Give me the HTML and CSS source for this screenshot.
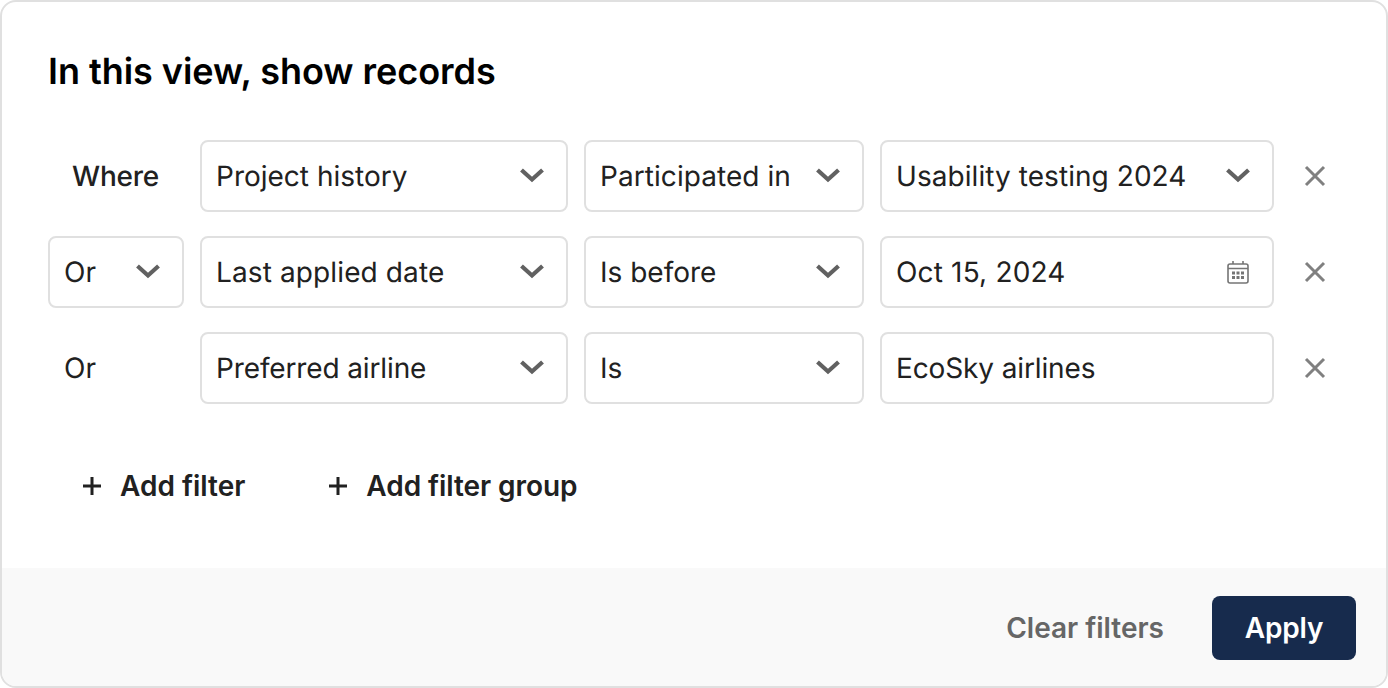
FILE: index.html
```html
<!DOCTYPE html>
<html lang="en">
<head>
<meta charset="utf-8">
<title>Filters</title>
<link rel="stylesheet" href="styles.css">
</head>
<body>
<svg class="defs" width="0" height="0" aria-hidden="true">
  <symbol id="chev" viewBox="0 0 24 24"><path d="M1.500 6 12 15.500 22.500 6" fill="none" stroke="currentColor" stroke-width="4.200"/></symbol>
  <symbol id="close" viewBox="0 0 24 24"><path d="M3 3 21 21M21 3 3 21" fill="none" stroke="currentColor" stroke-width="3"/></symbol>
  <symbol id="plus" viewBox="0 0 24 24"><path d="M12 3V21M3 12H21" fill="none" stroke="currentColor" stroke-width="3"/></symbol>
  <symbol id="cal" viewBox="0 0 24 24">
    <path d="M4 4H20A2 2 0 0 1 22 6V21A2 2 0 0 1 20 23H4A2 2 0 0 1 2 21V6A2 2 0 0 1 4 4ZM2 8.500H22M7 1V4M17 1V4" fill="none" stroke="currentColor" stroke-width="1.600"/>
    <path d="M6 11.500h3v3h-3zM10.500 11.500h3v3h-3zM15 11.500h3v3h-3zM6 16h3v3h-3zM10.500 16h3v3h-3zM15 16h3v3h-3z" fill="currentColor"/>
  </symbol>
</svg>
<main class="card">
  <section class="body">
    <h1 class="title">In this view, show records</h1>
    <div class="rows">
      <span class="where">Where</span>
      <div class="field"><span>Project history</span><svg class="chev"><use href="#chev"/></svg></div>
      <div class="field"><span class="loose-1">Participated in</span><svg class="chev"><use href="#chev"/></svg></div>
      <div class="field"><span class="loose-1">Usability testing 2024</span><svg class="chev"><use href="#chev"/></svg></div>
      <button class="remove" type="button" aria-label="Remove"><svg class="x"><use href="#close"/></svg></button>

      <div class="field"><span>Or</span><svg class="chev"><use href="#chev"/></svg></div>
      <div class="field"><span class="loose-2">Last applied date</span><svg class="chev"><use href="#chev"/></svg></div>
      <div class="field"><span>Is before</span><svg class="chev"><use href="#chev"/></svg></div>
      <div class="field"><span class="loose-3">Oct 15, 2024</span><svg class="cal"><use href="#cal"/></svg></div>
      <button class="remove" type="button" aria-label="Remove"><svg class="x"><use href="#close"/></svg></button>

      <span class="or">Or</span>
      <div class="field"><span class="tight-2">Preferred airline</span><svg class="chev"><use href="#chev"/></svg></div>
      <div class="field"><span>Is</span><svg class="chev"><use href="#chev"/></svg></div>
      <div class="field"><span class="tight-2">EcoSky airlines</span></div>
      <button class="remove" type="button" aria-label="Remove"><svg class="x"><use href="#close"/></svg></button>
    </div>
    <div class="adds">
      <button class="add" type="button"><svg class="plus"><use href="#plus"/></svg>Add filter</button>
      <button class="add add-group" type="button"><svg class="plus"><use href="#plus"/></svg>Add filter group</button>
    </div>
  </section>
  <footer class="foot">
    <button class="clear" type="button">Clear filters</button>
    <button class="apply" type="button">Apply</button>
  </footer>
</main>
</body>
</html>
```
FILE: styles.css
```css
* { box-sizing: border-box; }
html, body { margin: 0; height: 100%; }
body { background: #fff; font-family: Inter, "Liberation Sans", sans-serif; color: #212121; text-rendering: geometricPrecision; }
.defs { position: absolute; }
.card {
  width: 1388px;
  height: 688px;
  border: 2px solid #e0e0e0;
  border-radius: 16px;
  overflow: hidden;
  display: flex;
  flex-direction: column;
  background: #fff;
}
.body { flex: 1; padding: 45px 46px 0; }
.title {
  margin: 0;
  font-size: 36px;
  line-height: 48px;
  font-weight: 600;
  letter-spacing: -0.04px;
  color: #000;
}
.rows {
  margin-top: 45px;
  display: grid;
  grid-template-columns: 136px 368px 280px 394px 82px;
  grid-auto-rows: 72px;
  column-gap: 16px;
  row-gap: 24px;
  align-items: center;
  width: max-content;
}
.field {
  height: 72px;
  border: 2px solid #e0e0e0;
  border-radius: 8px;
  padding: 0 22px 0 14px;
  display: flex;
  align-items: center;
  justify-content: space-between;
  font-size: 28px;
  background: #fff;
  white-space: nowrap;
}
.loose-1 { letter-spacing: 0.06px; }
.loose-2 { letter-spacing: 0.12px; }
.loose-3 { letter-spacing: 0.17px; }
.tight-2 { letter-spacing: -0.13px; }
.where { font-size: 28px; font-weight: 500; letter-spacing: -0.2px; padding-left: 24px; }
.or { font-size: 28px; padding-left: 16px; }
.chev { width: 24px; height: 24px; color: #616161; flex: none; }
.cal { width: 24px; height: 24px; color: #757575; flex: none; }
.remove {
  border: 0;
  background: none;
  padding: 0;
  margin-left: 13px;
  width: 24px;
  height: 24px;
  color: #808080;
  display: flex;
}
.x { width: 24px; height: 24px; }
.adds { margin-top: 50px; display: flex; gap: 17px; }
.add {
  border: 0;
  background: none;
  padding: 0 32px;
  height: 64px;
  display: flex;
  align-items: center;
  gap: 16px;
  font: 600 28px Inter, "Liberation Sans", sans-serif;
  color: #212121;
}
.add-group { letter-spacing: -0.06px; }
.plus { width: 24px; height: 24px; }
.foot {
  height: 118px;
  background: #f9f9f9;
  padding: 28px 30px 0 0;
  display: flex;
  justify-content: flex-end;
  gap: 16px;
}
.clear, .apply {
  height: 64px;
  padding: 0 32px;
  border: 0;
  border-radius: 8px;
  font: 600 28px Inter, "Liberation Sans", sans-serif;
}
.clear { background: none; color: #666; }
.apply { background: #172b4d; color: #fff; width: 144px; letter-spacing: -0.2px; }
```
